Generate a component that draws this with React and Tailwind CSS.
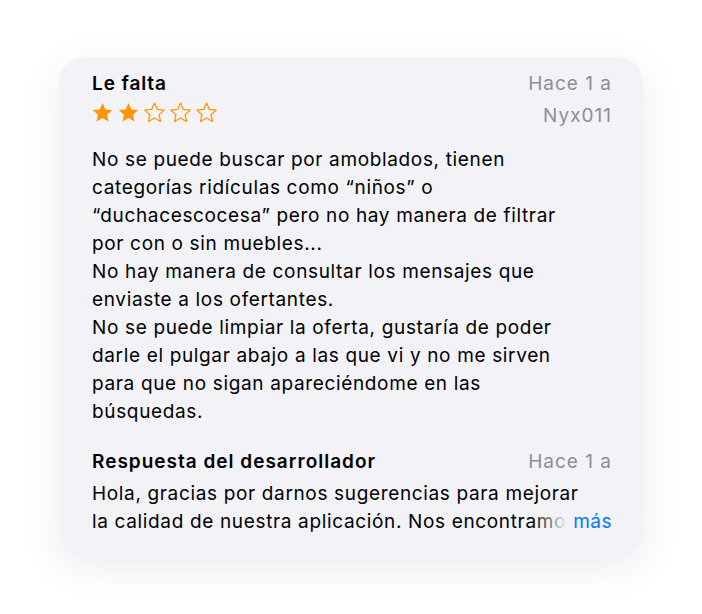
import React from 'react';

const Star = ({ filled }) => (
  <svg viewBox="0 0 24 24" className="w-[23px] h-[23px]">
    <path
      d="M12 2.2l2.95 6.6 7.2.7-5.43 4.8 1.6 7.07L12 17.7l-6.32 3.67 1.6-7.07L1.85 9.5l7.2-.7z"
      fill={filled ? '#ff9500' : 'none'}
      stroke="#ff9500"
      strokeWidth={filled ? 0 : 1.3}
      strokeLinejoin="round"
    />
  </svg>
);

export default function App() {
  const rating = 2;

  return (
    <div className="w-[702px] h-[614px] bg-white flex items-start justify-center pt-[57px] font-['Inter','Noto_Sans',sans-serif] antialiased">
      <div className="w-[584px] bg-[#f2f2f7] rounded-[26px] shadow-[0_10px_40px_rgba(0,0,0,0.08)] pl-[33px] pr-[31px] pt-[12px] pb-[21px]">
        {/* Header */}
        <div className="flex justify-between">
          <div className="flex flex-col">
            <h2 className="text-[19px] leading-[30px] font-semibold tracking-[0.9px] text-black">Le falta</h2>
            <div className="flex gap-[3px] -ml-[1px] mt-[2px]">
              {[1, 2, 3, 4, 5].map((i) => (
                <Star key={i} filled={i <= rating} />
              ))}
            </div>
          </div>
          <div className="flex flex-col items-end text-[19px] tracking-[1px] text-[#8e8e93]">
            <span className="leading-[30px]">Hace 1 a</span>
            <span className="leading-[34px]">Nyx011</span>
          </div>
        </div>

        {/* Review body */}
        <p className="mt-[13px] text-[19px] leading-[28px] tracking-[0.65px] text-black">
          No se puede buscar por amoblados, tienen<br />
          categorías ridículas como “niños” o<br />
          “duchacescocesa” pero no hay manera de filtrar<br />
          por con o sin muebles...<br />
          No hay manera de consultar los mensajes que<br />
          enviaste a los ofertantes.<br />
          No se puede limpiar la oferta, gustaría de poder<br />
          darle el pulgar abajo a las que vi y no me sirven<br />
          para que no sigan apareciéndome en las<br />
          búsquedas.
        </p>

        {/* Developer response */}
        <div className="mt-[22px] flex justify-between items-baseline">
          <h3 className="text-[19px] leading-[28px] font-semibold tracking-[1px] text-black">Respuesta del desarrollador</h3>
          <span className="text-[19px] leading-[28px] tracking-[1px] text-[#8e8e93]">Hace 1 a</span>
        </div>
        <div className="relative mt-[4px] text-[19px] leading-[28px] tracking-[0.65px] text-black">
          <p>Hola, gracias por darnos sugerencias para mejorar</p>
          <p className="whitespace-nowrap overflow-hidden">la calidad de nuestra aplicación. Nos encontramos</p>
          <div className="absolute right-0 bottom-0 h-[28px] flex items-center">
            <div className="w-[34px] h-full bg-gradient-to-r from-[#f2f2f700] to-[#f2f2f7]" />
            <span className="bg-[#f2f2f7] pl-[6px] text-[#007aff] tracking-[0.5px]">más</span>
          </div>
        </div>
      </div>
    </div>
  );
}
